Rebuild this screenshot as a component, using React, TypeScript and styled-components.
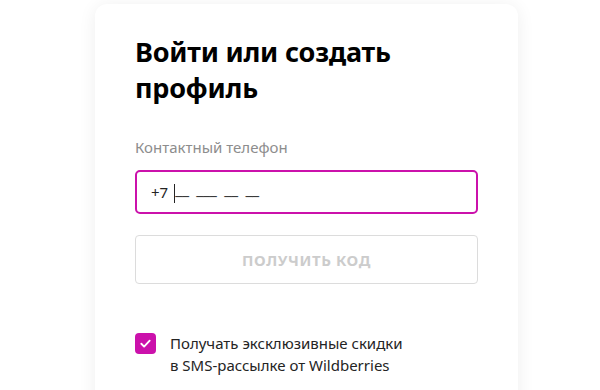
import styled, { createGlobalStyle } from "styled-components";

const GlobalStyle = createGlobalStyle`
  html, body {
    margin: 0;
    padding: 0;
    background: #ffffff;
    font-family: "Noto Sans", "Open Sans", Arial, sans-serif;
    overflow: hidden;
  }
`;

const Page = styled.main`
  width: 600px;
  height: 390px;
  overflow: hidden;
  padding-top: 4px;
  box-sizing: border-box;
`;

const Card = styled.section`
  margin-left: 95px;
  width: 423px;
  height: 460px;
  box-sizing: border-box;
  padding: 30px 40px;
  background: #ffffff;
  border-radius: 12px;
  box-shadow: 0 2px 18px rgba(0, 0, 0, 0.07);
  display: flex;
  flex-direction: column;
`;

const Title = styled.h1`
  margin: 0;
  font-size: 27px;
  line-height: 36px;
  font-weight: 700;
  color: #000000;
  letter-spacing: -0.2px;
`;

const Label = styled.label`
  margin-top: 31px;
  font-size: 15px;
  line-height: 20px;
  color: #8d8d8d;
`;

const PhoneField = styled.div`
  margin-top: 13px;
  height: 44px;
  box-sizing: border-box;
  border: 2px solid #cb11ab;
  border-radius: 5px;
  display: flex;
  align-items: center;
  padding-left: 14px;
  font-size: 15px;
  color: #242424;
`;

const Prefix = styled.span`
  margin-right: 6px;
`;

const Caret = styled.span`
  display: inline-block;
  width: 1px;
  height: 19px;
  background: #242424;
  margin-top: 2px;
`;

const Mask = styled.span`
  font-size: 16px;
  letter-spacing: -0.4px;
  word-spacing: 4px;
  white-space: pre;
  color: #3a3a3a;
  transform: translateY(-3px);
`;

const CodeButton = styled.button`
  margin-top: 21px;
  height: 49px;
  border: 1.5px solid #dcdcdc;
  border-radius: 4px;
  background: #ffffff;
  font-family: inherit;
  font-size: 15px;
  font-weight: 700;
  color: #cccccc;
  text-transform: uppercase;
  letter-spacing: 0.6px;
`;

const ConsentRow = styled.label`
  margin-top: 48px;
  display: flex;
  align-items: flex-start;
  gap: 14px;
`;

const Box = styled.span`
  flex: none;
  width: 21px;
  height: 21px;
  margin-top: 1px;
  border-radius: 4px;
  background: #cb11ab;
  display: flex;
  align-items: center;
  justify-content: center;
`;

const ConsentText = styled.span`
  font-size: 15px;
  line-height: 22px;
  color: #242424;
`;

export default function App() {
  return (
    <>
      <GlobalStyle />
      <Page>
        <Card>
          <Title>
            Войти или создать
            <br />
            профиль
          </Title>
          <Label>Контактный телефон</Label>
          <PhoneField>
            <Prefix>+7</Prefix>
            <Caret />
            <Mask>__ ___ __ __</Mask>
          </PhoneField>
          <CodeButton>Получить код</CodeButton>
          <ConsentRow>
            <Box>
              <svg width="13" height="13" viewBox="0 0 14 14" fill="none">
                <path
                  d="M2.5 7.3l3 3 6-6.3"
                  stroke="#ffffff"
                  strokeWidth="2"
                  strokeLinecap="round"
                  strokeLinejoin="round"
                />
              </svg>
            </Box>
            <ConsentText>
              Получать эксклюзивные скидки
              <br />в SMS-рассылке от Wildberries
            </ConsentText>
          </ConsentRow>
        </Card>
      </Page>
    </>
  );
}
